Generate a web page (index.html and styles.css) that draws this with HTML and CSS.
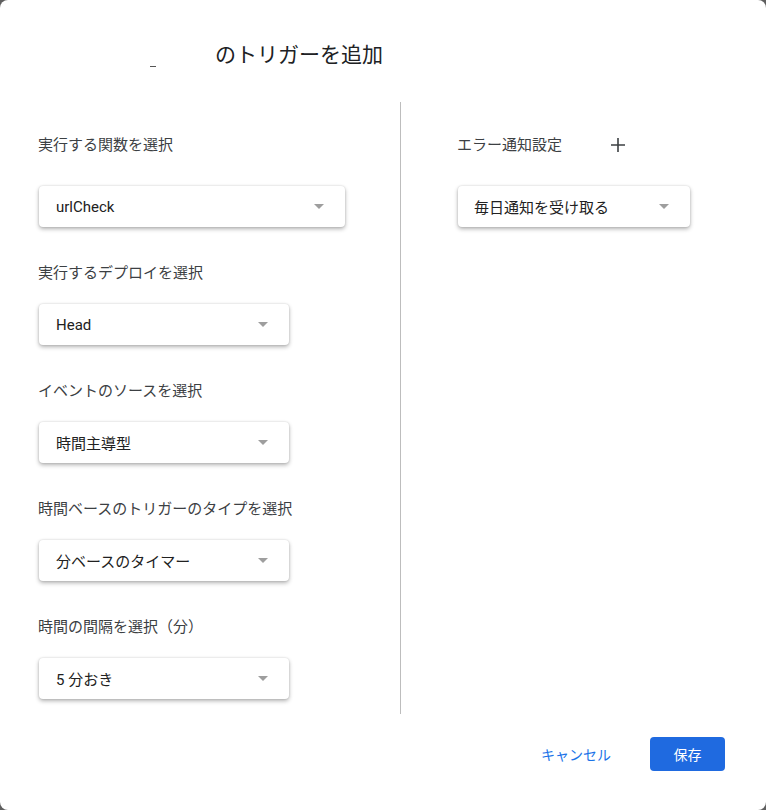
FILE: index.html
```html
<!DOCTYPE html>
<html lang="ja">
<head>
    <meta charset="UTF-8">
    <meta name="viewport" content="width=device-width, initial-scale=1.0">
    <title>トリガーを追加</title>
    <link rel="stylesheet" href="styles.css">
</head>
<body>

    <div class="dialog">
        <div class="dialog-header">
            <div class="project-name"><span class="name-mark"></span></div>
            <h1>のトリガーを追加</h1>
        </div>

        <div class="dialog-content">
            <div class="col-left">
                <div class="field-label first">実行する関数を選択</div>
                <div class="select wide">
                    <span>urlCheck</span>
                    <span class="arrow"></span>
                </div>

                <div class="field-label">実行するデプロイを選択</div>
                <div class="select">
                    <span>Head</span>
                    <span class="arrow"></span>
                </div>

                <div class="field-label">イベントのソースを選択</div>
                <div class="select">
                    <span>時間主導型</span>
                    <span class="arrow"></span>
                </div>

                <div class="field-label">時間ベースのトリガーのタイプを選択</div>
                <div class="select">
                    <span>分ベースのタイマー</span>
                    <span class="arrow"></span>
                </div>

                <div class="field-label">時間の間隔を選択（分）</div>
                <div class="select">
                    <span>5 分おき</span>
                    <span class="arrow"></span>
                </div>
            </div>

            <div class="col-right">
                <div class="field-label first">
                    エラー通知設定
                    <button class="add-btn" title="追加">
                        <svg width="16" height="16" viewBox="0 0 16 16">
                            <path d="M8 1v14M1 8h14" stroke="#3c4043" stroke-width="1.6" fill="none"/>
                        </svg>
                    </button>
                </div>
                <div class="select notify">
                    <span>毎日通知を受け取る</span>
                    <span class="arrow"></span>
                </div>
            </div>
        </div>

        <div class="dialog-footer">
            <button class="btn-cancel">キャンセル</button>
            <button class="btn-save">保存</button>
        </div>
    </div>

</body>
</html>
```

FILE: styles.css
```css
html, body {
    height: 100%;
    margin: 0;
    padding: 0;
    font-family: Roboto, "Noto Sans CJK JP", sans-serif;
}
body {
    background-color: #5f5f5f;
}
.dialog {
    height: 810px;
    background-color: #fff;
    border-radius: 8px;
    display: flex;
    flex-direction: column;
}
.dialog-header {
    display: flex;
    padding-top: 40px;
    height: 30px;
}
.project-name {
    width: 215px;
    box-sizing: border-box;
    padding-left: 150px;
    padding-top: 26px;
}
.name-mark {
    display: block;
    width: 6px;
    height: 1px;
    background-color: #555;
}
h1 {
    margin: 0;
    font-size: 21px;
    font-weight: 400;
    line-height: 30px;
    color: #202124;
}
.dialog-content {
    display: flex;
    margin-top: 32px;
    height: 612px;
}
.col-left {
    width: 401px;
    box-sizing: border-box;
    padding: 23px 0 0 38px;
    border-right: 1px solid #bdbdbd;
}
.col-right {
    padding: 23px 0 0 56px;
}
.field-label {
    height: 20px;
    line-height: 20px;
    font-size: 15px;
    color: #3c4043;
    margin-bottom: 21px;
    display: flex;
    align-items: center;
}
.field-label.first {
    height: 40px;
    line-height: 40px;
}
.add-btn {
    border: none;
    background: none;
    padding: 0;
    margin-left: 48px;
    width: 16px;
    height: 16px;
    display: flex;
    cursor: pointer;
}
.select {
    width: 250px;
    height: 41px;
    box-sizing: border-box;
    margin: 0 0 36px 1px;
    padding: 0 21px 0 17px;
    display: flex;
    align-items: center;
    justify-content: space-between;
    background-color: #fff;
    border-radius: 4px;
    box-shadow: 0 2px 4px rgba(0, 0, 0, 0.3), 0 0 2px rgba(0, 0, 0, 0.15);
    font-size: 15px;
    color: #212121;
    cursor: pointer;
}
.select.wide {
    width: 306px;
}
.select.notify {
    width: 232px;
    padding-left: 16px;
}
.arrow {
    width: 0;
    height: 0;
    border-left: 5px solid transparent;
    border-right: 5px solid transparent;
    border-top: 5px solid #9e9e9e;
}
.dialog-footer {
    display: flex;
    justify-content: flex-end;
    align-items: center;
    padding: 22px 41px 0 0;
}
.btn-cancel {
    border: none;
    background: none;
    font-family: inherit;
    font-size: 14px;
    color: #1a73e8;
    padding: 8px 8px;
    margin-right: 31px;
    cursor: pointer;
}
.btn-save {
    border: none;
    width: 75px;
    height: 34px;
    border-radius: 4px;
    background-color: #1f6ae0;
    color: #fff;
    font-family: inherit;
    font-size: 14px;
    cursor: pointer;
}
```
